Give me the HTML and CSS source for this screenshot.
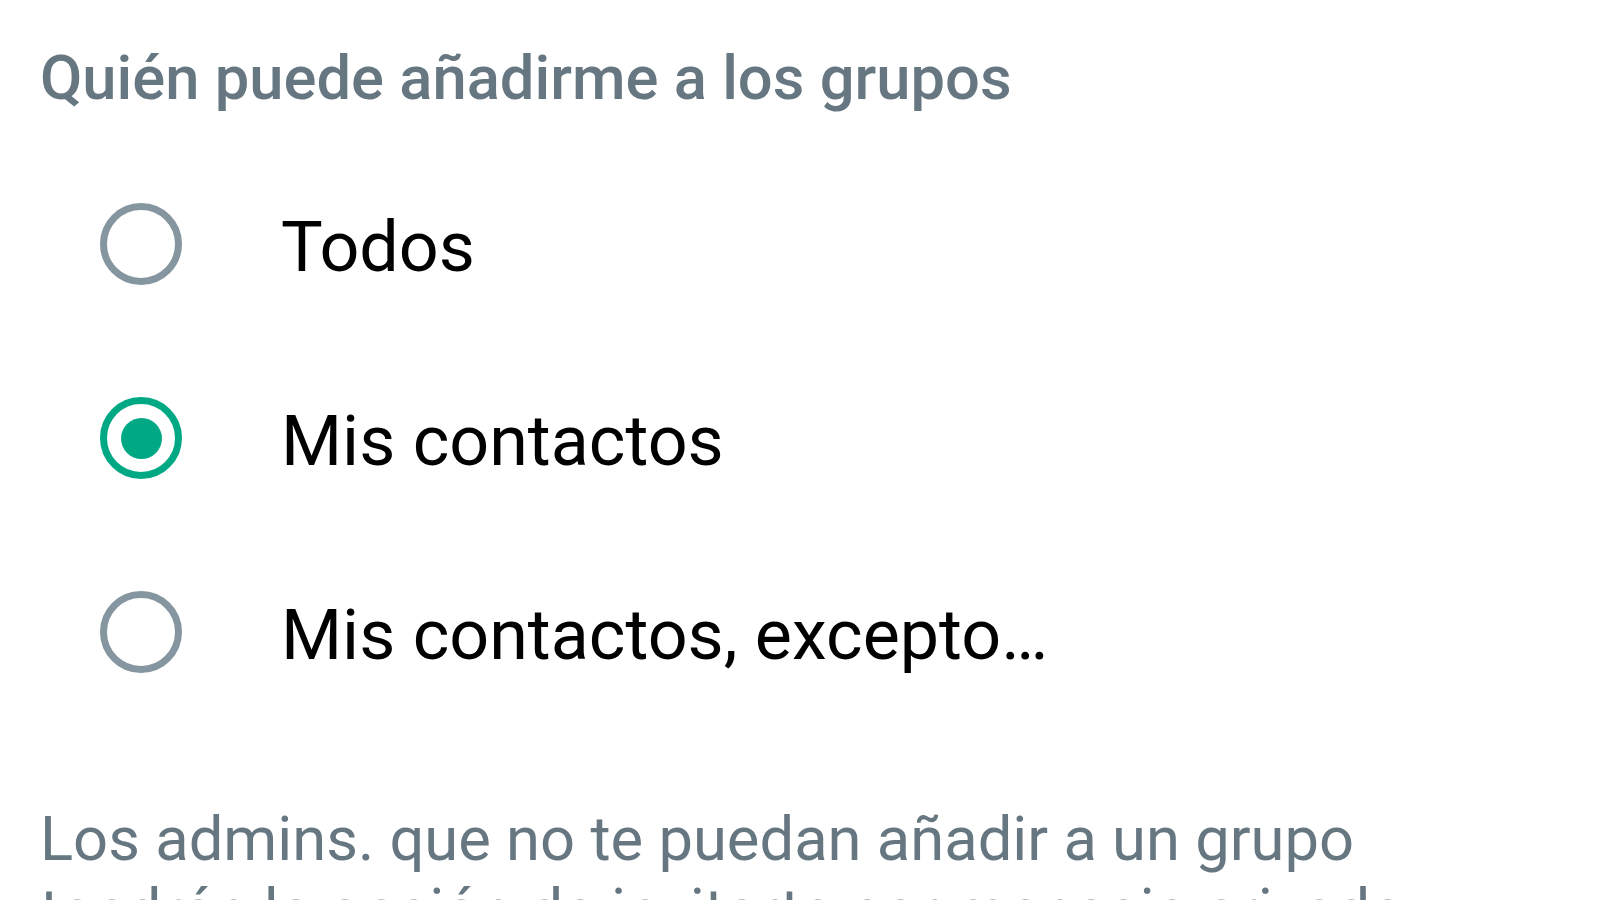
FILE: index.html
```html
<!DOCTYPE html>
<html lang="es">
<head>
    <meta charset="UTF-8">
    <meta name="viewport" content="width=device-width, initial-scale=1.0">
    <title>Quién puede añadirme a los grupos</title>
    <link rel="stylesheet" href="styles.css">
</head>
<body>

    <h2 class="titulo">Quién puede añadirme a los grupos</h2>

    <div class="opciones">
        <label class="opcion">
            <span class="radio"></span>
            <span class="texto">Todos</span>
        </label>
        <label class="opcion">
            <span class="radio marcado"></span>
            <span class="texto">Mis contactos</span>
        </label>
        <label class="opcion">
            <span class="radio"></span>
            <span class="texto">Mis contactos, excepto…</span>
        </label>
    </div>

    <p class="nota">Los admins. que no te puedan añadir a un grupo tendrán la opción de invitarte por mensaje privado.</p>

</body>
</html>
```

FILE: styles.css
```css
body {
    margin: 0;
    padding: 42px 40px 0 40px;
    background-color: #ffffff;
    font-family: Roboto, "Noto Sans", sans-serif;
    overflow: hidden;
}
.titulo {
    margin: 0;
    font-size: 61.5px;
    line-height: 72px;
    font-weight: 500;
    color: #667781;
}
.opciones {
    margin-top: 33px;
    display: flex;
    flex-direction: column;
}
.opcion {
    height: 194px;
    display: flex;
    align-items: center;
    padding-left: 60px;
}
.radio {
    width: 68px;
    height: 68px;
    border: 7px solid #8696a0;
    border-radius: 50%;
    display: flex;
    align-items: center;
    justify-content: center;
    flex-shrink: 0;
}
.radio.marcado {
    border-color: #00a884;
}
.radio.marcado::after {
    content: "";
    width: 41px;
    height: 41px;
    border-radius: 50%;
    background-color: #00a884;
}
.texto {
    margin-left: 99px;
    margin-top: 6px;
    font-size: 70px;
    color: #000000;
}
.nota {
    margin: 74px 0 0 0;
    font-size: 61.5px;
    line-height: 72px;
    color: #667781;
    width: 1400px;
}
```
